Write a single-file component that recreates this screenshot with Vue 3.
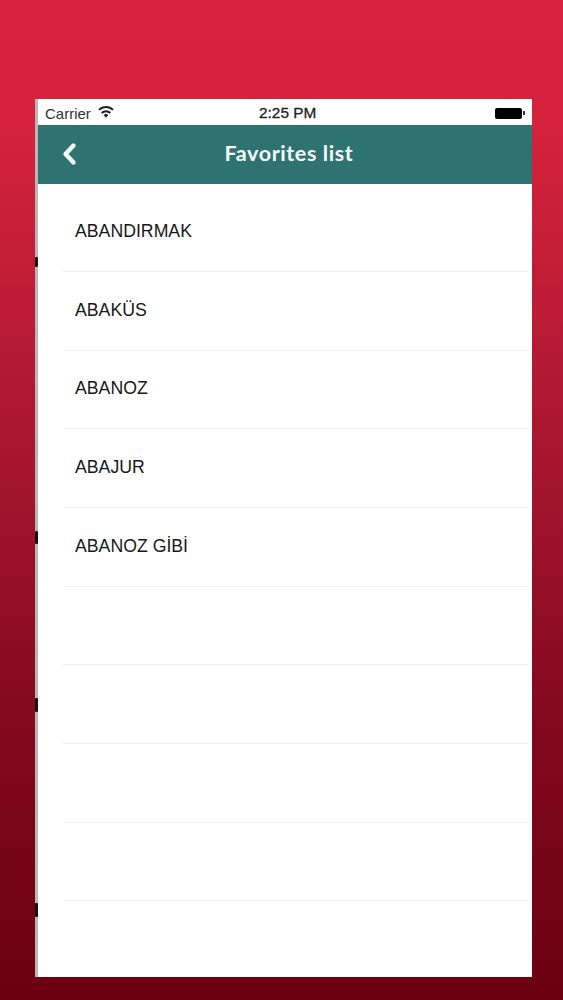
<script setup>
const items = ['ABANDIRMAK', 'ABAKÜS', 'ABANOZ', 'ABAJUR', 'ABANOZ GİBİ', '', '', '', '', '']
const marks = [
  { y: 262, h: 10 },
  { y: 537, h: 13 },
  { y: 705, h: 14 },
  { y: 910, h: 14 },
]
</script>

<template>
  <div class="page">
    <div class="phone">
      <span
        v-for="m in marks"
        :key="m.y"
        class="mark"
        :style="{ top: m.y - 99 - m.h / 2 + 'px', height: m.h + 'px' }"
      ></span>
      <div class="status">
        <div class="status-left">
          <span>Carrier</span>
          <svg class="wifi" viewBox="0 0 16 12" width="16" height="12">
            <path d="M8 11.8 5.6 9.1a3.4 3.4 0 0 1 4.8 0Z" fill="#222" />
            <path d="M3.7 7a6 6 0 0 1 8.6 0" fill="none" stroke="#222" stroke-width="2" />
            <path d="M1 3.9a10 10 0 0 1 14 0" fill="none" stroke="#222" stroke-width="2" />
          </svg>
        </div>
        <span class="time">2:25 PM</span>
        <div class="battery"><i></i><b></b></div>
      </div>
      <header class="nav">
        <svg class="back" viewBox="0 0 16 24" width="16" height="24">
          <path d="M12.5 3.5 4.5 12l8 8.5" fill="none" stroke="#f4fafa" stroke-width="4.4" stroke-linecap="round" stroke-linejoin="round" />
        </svg>
        <h1>Favorites list</h1>
      </header>
      <ul class="list">
        <li v-for="(item, i) in items" :key="i">{{ item }}</li>
      </ul>
    </div>
  </div>
</template>

<style>
html, body { margin: 0; background: #6d0012; }
</style>

<style scoped>
.page {
  box-sizing: border-box;
  width: 563px;
  height: 1000px;
  padding: 99px 31px 23px 35px;
  background: linear-gradient(180deg, #d62440 0%, #d5223d 12%, #bd1c36 30%, #9e132b 52%, #82091e 72%, #6b0011 100%);
  overflow: hidden;
}
.phone {
  position: relative;
  box-sizing: border-box;
  height: 878px;
  background: #fff;
  border-left: 3px solid #b9b6b6;
  display: flex;
  flex-direction: column;
  font-family: "Liberation Sans", Arial, sans-serif;
}
.mark {
  position: absolute;
  left: -3px;
  width: 3px;
  background: #1a1013;
  border-radius: 1px;
}
.status {
  height: 26px;
  flex: none;
  display: flex;
  align-items: center;
  position: relative;
  justify-content: space-between;
  padding: 3px 7px 1px 7px;
  box-sizing: border-box;
  font-size: 15px;
  color: #333;
}
.status-left { display: flex; align-items: center; gap: 7px; }
.wifi { margin-bottom: 3px; }
.time {
  position: absolute;
  left: 221px;
  color: #222;
  font-size: 15.4px;
  -webkit-text-stroke: 0.3px #222;
}
.battery { display: flex; align-items: center; gap: 1px; }
.battery i { display: block; width: 27px; height: 11px; background: #000; border-radius: 2px; }
.battery b { display: block; width: 2px; height: 4px; background: #333; }
.nav {
  height: 59px;
  flex: none;
  position: relative;
  display: flex;
  align-items: center;
  justify-content: center;
  padding: 0 0 3px 8px;
  box-sizing: border-box;
  background: #2f7370;
  color: #f6fbfb;
}
.nav h1 {
  margin: 0;
  font-family: Lato, sans-serif;
  font-size: 21.5px;
  font-weight: 700;
  letter-spacing: 0.6px;
}
.back { position: absolute; left: 23px; top: 17px; }
.list {
  list-style: none;
  margin: 0;
  padding: 9.3px 0 0 25px;
  flex: 1;
  min-height: 0;
  overflow: hidden;
}
.list li {
  box-sizing: border-box;
  height: 78.7px;
  margin-right: 4px;
  padding: 0 0 1.4px 12px;
  display: flex;
  align-items: center;
  border-bottom: 1px solid #eeeeee;
  font-size: 17.7px;
  color: #171717;
}
.list li:last-child { border-bottom: none; }
</style>
